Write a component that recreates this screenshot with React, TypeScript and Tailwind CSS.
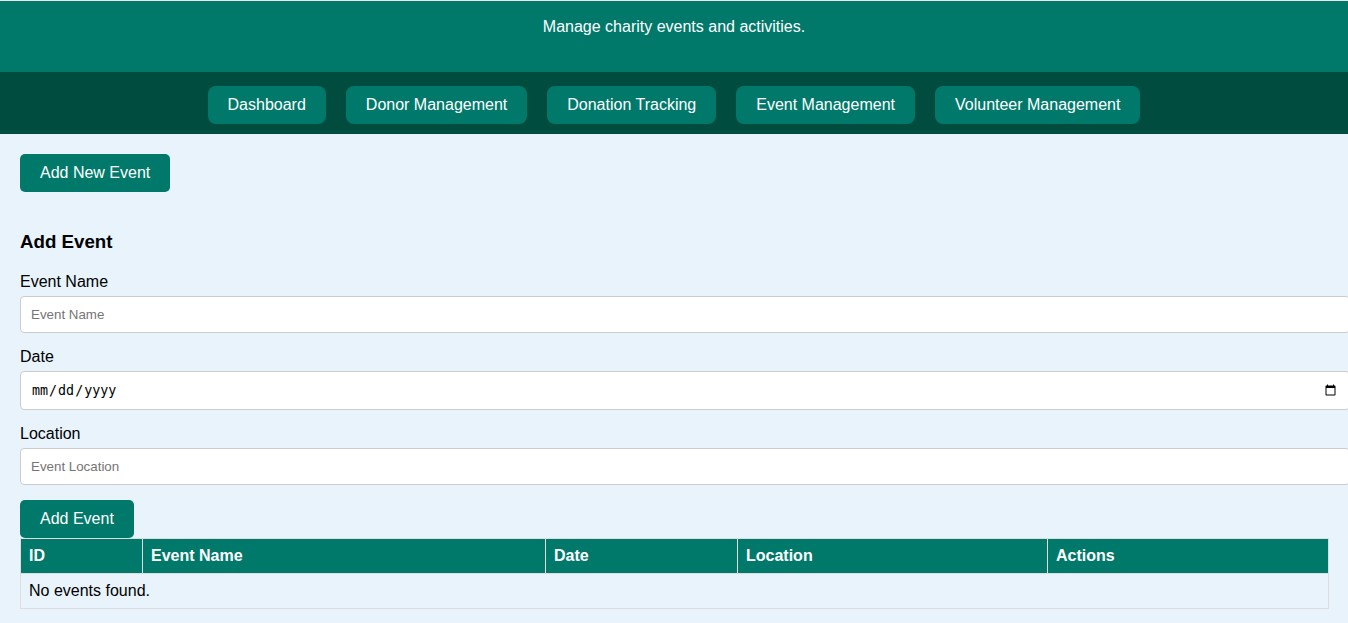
import React from 'react'

const navItems = ['Dashboard', 'Donor Management', 'Donation Tracking', 'Event Management', 'Volunteer Management']

const columns = [
    { label: 'ID', w: 'w-[122px]' },
    { label: 'Event Name', w: 'w-[403px]' },
    { label: 'Date', w: 'w-[192px]' },
    { label: 'Location', w: 'w-[310px]' },
    { label: 'Actions', w: 'w-[281px]' },
]

function App() {
    return (
        <div className="min-h-[623px] bg-[#e8f3fc] font-['Liberation_Sans',Arial,sans-serif] text-black border-t border-[#eee6e6] overflow-hidden">
            <header className="bg-[#00796b] h-[71px] text-center text-white">
                <p className="pt-[17px] text-base leading-[18px]">Manage charity events and activities.</p>
            </header>
            <nav className="bg-[#004d40] h-[62px] flex justify-center items-start pt-[14px] gap-5">
                {navItems.map((item) => (
                    <button key={item} className="bg-[#00796b] text-white text-base leading-[18px] px-5 py-[10px] rounded-[8px]">
                        {item}
                    </button>
                ))}
            </nav>
            <main className="p-5">
                <button className="bg-[#00796b] text-white text-base leading-[18px] px-5 py-[10px] rounded-[5px]">Add New Event</button>
                <div className="mt-[20px]">
                    <h3 className="text-[18.72px] font-bold leading-[22px] pt-[19px] mb-[20px]">Add Event</h3>
                    <label className="block text-base leading-[18px] mb-[5px]">Event Name</label>
                    <input
                        type="text"
                        placeholder="Event Name"
                        className="box-content w-full bg-white border border-[#ccc] rounded-[4px] p-[10px] text-[13.33px] leading-[15px] placeholder:text-[#757575] mb-[15px] block"
                    />
                    <label className="block text-base leading-[18px] mb-[5px]">Date</label>
                    <input
                        type="date"
                        className="box-content w-full bg-white border border-[#ccc] rounded-[4px] px-[10px] py-[10px] h-[17px] text-[13.33px] leading-[17px] font-['DejaVu_Sans_Mono',monospace] mb-[15px] block"
                    />
                    <label className="block text-base leading-[18px] mb-[5px]">Location</label>
                    <input
                        type="text"
                        placeholder="Event Location"
                        className="box-content w-full bg-white border border-[#ccc] rounded-[4px] p-[10px] text-[13.33px] leading-[15px] placeholder:text-[#757575] mb-[15px] block"
                    />
                    <button className="bg-[#00796b] text-white text-base leading-[18px] px-5 py-[10px] rounded-[5px]">Add Event</button>
                </div>
                <table className="w-[1308px] border-collapse table-fixed">
                    <thead>
                        <tr className="bg-[#00796b] text-white">
                            {columns.map((c) => (
                                <th key={c.label} className={`${c.w} border border-[#ddd] text-left font-bold text-base leading-[18px] px-2 py-2`}>
                                    {c.label}
                                </th>
                            ))}
                        </tr>
                    </thead>
                    <tbody>
                        <tr>
                            <td colSpan={5} className="border border-[#ddd] text-base leading-[18px] px-2 py-2">No events found.</td>
                        </tr>
                    </tbody>
                </table>
            </main>
        </div>
    )
}

export default App
